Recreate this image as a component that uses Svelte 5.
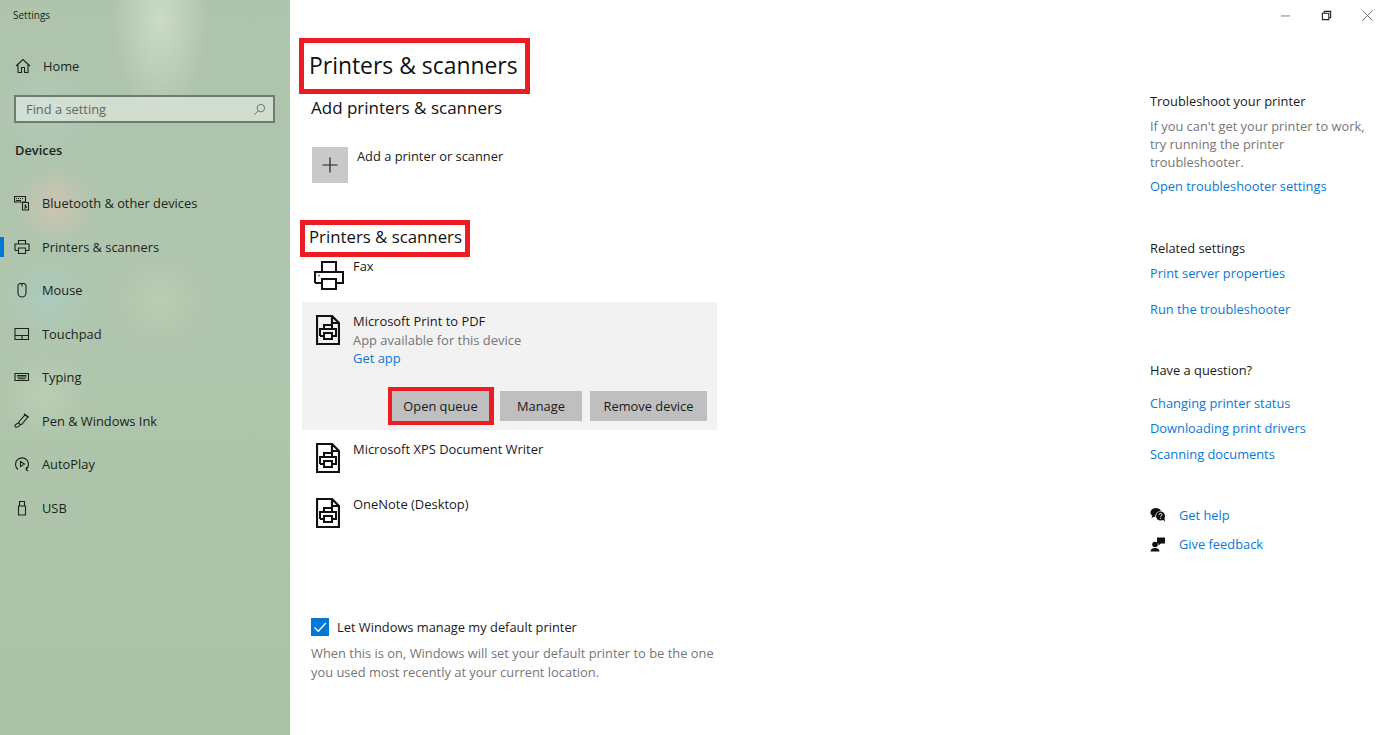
<script>
  const nav = [
    { label: 'Bluetooth & other devices', icon: 'M.5 1.500h11v5.500H.5zM2 3.500h1M4 3.500h1M6 3.500h1M8 3.500h1M2 5.500h5M8.500 7.500v7.500h6V7.500zM11.500 9.500v3.500M10.500 10.500l2 1.500-2 1.500' },
    { label: 'Printers & scanners', active: true, icon: 'M4.500 5V1.500h7V5M1 11.500V5h14v6.500h-3.500M1 11.500h3.500M4.500 9h7v5.500h-7z' },
    { label: 'Mouse', icon: 'M4 4.500a2.500 2.500 0 0 1 2.500-3h3a2.500 2.500 0 0 1 2.500 3v6.500a4 4 0 0 1-8 0zM8 1.500v3' },
    { label: 'Touchpad', icon: 'M1 2.500h13.500v11H1zM1 9.500h13.500M8 9.500v4' },
    { label: 'Typing', icon: 'M1 4.500h13.500v7H1zM3 6.500h9.500M3 8h9.500M4 9.800h7.500' },
    { label: 'Pen & Windows Ink', icon: 'M6 12l-1.200-3L11 1.800 13.700 4 8 11zM10 .8l4.800 3.500M6 12c-1.500 2-4.500 3-5 1.300C.6 11.800 3 10.300 4.800 10' },
    { label: 'AutoPlay', icon: 'M4 13.500A6.500 6.500 0 1 1 12 13.500M6.500 5.500v5l4-2.500zM12 13.500l2 1.500M12 13.500l.5-2.500' },
    { label: 'USB', icon: 'M4.500 6h7v9h-7zM5.500 6V1.500h5V6M7 3.500h.01M9 3.500h.01' }
  ];

  const devices = [
    { name: 'Microsoft XPS Document Writer' },
    { name: 'OneNote (Desktop)' }
  ];

  const related = ['Print server properties', 'Run the troubleshooter'];
  const questions = ['Changing printer status', 'Downloading print drivers', 'Scanning documents'];
</script>

{#snippet docIcon()}
  <svg class="doc-icon" viewBox="0 0 24 30" fill="none" stroke="#111" stroke-width="2.200">
    <path d="M1 1h15l7 7v21H1zM16 1v7h7" />
    <path d="M8 14v-4h8v4M4 21v-7h16v7h-4M4 21h4M8 18h8v6H8z" stroke-width="2" />
  </svg>
{/snippet}

<div class="window">
  <aside class="sidebar">
    <div class="app-title">Settings</div>
    <div class="home">
      <svg class="nav-icon" viewBox="0 0 16 16" fill="none" stroke="#1c241c" stroke-width="1.100">
        <path d="M1 8l7-6.500L15 8M3 6.500V14.500h3.500V9.500h3v5H13V6.500" />
      </svg>
      <span>Home</span>
    </div>
    <div class="search">
      <span>Find a setting</span>
      <svg viewBox="0 0 16 16" fill="none" stroke="#5f6d60" stroke-width="1.100">
        <circle cx="9.700" cy="6.300" r="4.600" />
        <path d="M6.300 9.700L1.500 14.500" />
      </svg>
    </div>
    <div class="group">Devices</div>
    <nav>
      {#each nav as item}
        <div class="nav-row" class:active={item.active}>
          <svg class="nav-icon" viewBox="0 0 16 16" fill="none" stroke="#1c241c" stroke-width="1.100">
            <path d={item.icon} />
          </svg>
          <span>{item.label}</span>
        </div>
      {/each}
    </nav>
  </aside>

  <main class="main">
    <div class="window-controls">
      <svg viewBox="0 0 12 12" stroke="#777" fill="none"><path d="M1 6.500h10" /></svg>
      <svg viewBox="0 0 12 12" stroke="#222" fill="none" stroke-width="1.200"><path d="M1.500 3.500h7v7h-7zM3.500 3.500v-2h7v7h-2" /></svg>
      <svg viewBox="0 0 12 12" stroke="#666" fill="none"><path d="M.5.500l11 11M11.500.500l-11 11" /></svg>
    </div>

    <div class="columns">
      <section class="content">
        <h1 class="marked">Printers &amp; scanners</h1>
        <h2>Add printers &amp; scanners</h2>
        <div class="add-row">
          <div class="plus">
            <svg viewBox="0 0 16 16" stroke="#222" stroke-width="1.200" fill="none"><path d="M8 .5v15M.5 8h15" /></svg>
          </div>
          <span>Add a printer or scanner</span>
        </div>

        <h3 class="marked">Printers &amp; scanners</h3>

        <div class="fax-row">
          <svg viewBox="0 0 30 29" fill="none" stroke="#111" stroke-width="2">
            <path d="M8 11V1h14v10M1 22V11h28v11h-7M1 22h7M8 18h14v10H8zM4.500 14.500h1" />
          </svg>
          <span>Fax</span>
        </div>

        <div class="selected">
          <div class="selected-top">
            {@render docIcon()}
            <div class="selected-text">
              <div>Microsoft Print to PDF</div>
              <div class="muted">App available for this device</div>
              <div class="link">Get app</div>
            </div>
          </div>
          <div class="actions">
            <div class="queue-mark"><button type="button">Open queue</button></div>
            <button type="button" class="manage">Manage</button>
            <button type="button" class="remove">Remove device</button>
          </div>
        </div>

        {#each devices as device}
          <div class="device-row">
            {@render docIcon()}
            <span>{device.name}</span>
          </div>
        {/each}

        <label class="check-row">
          <span class="check">
            <svg viewBox="0 0 18 18" fill="none" stroke="#fff" stroke-width="1.300"><path d="M3.500 9.500l3.800 3.800 7.500-8.300" /></svg>
          </span>
          <span>Let Windows manage my default printer</span>
        </label>
        <p class="muted note">When this is on, Windows will set your default printer to be the one<br />you used most recently at your current location.</p>
      </section>

      <aside class="rail">
        <div class="rail-title">Troubleshoot your printer</div>
        <p class="muted rail-text">If you can't get your printer to work,<br />try running the printer<br />troubleshooter.</p>
        <div class="link rail-open">Open troubleshooter settings</div>

        <div class="rail-title related">Related settings</div>
        {#each related as text, i}
          <div class="link related-link" class:first={i === 0}>{text}</div>
        {/each}

        <div class="rail-title question">Have a question?</div>
        {#each questions as text}
          <div class="link question-link">{text}</div>
        {/each}

        <div class="help help-first">
          <svg viewBox="0 0 16 16" fill="#111">
            <path d="M6 1C2.800 1 .5 3 .5 5.500c0 1.400.7 2.500 1.800 3.300L1.500 11l2.800-1.200c.4.100.7.100 1 .2-.2-3.300 2-5.800 5.700-6C10.200 2.200 8.300 1 6 1z" />
            <circle cx="10.500" cy="9" r="4.500" />
            <path d="M12.500 12.500l2.500 2-.5-3.500z" />
            <path d="M9 7.800c0-1.800 3-1.800 3 0 0 1.200-1.500 1-1.500 2.200M10.500 11.200v.8" stroke="#fff" stroke-width="1" fill="none" />
          </svg>
          <span class="link">Get help</span>
        </div>
        <div class="help">
          <svg viewBox="0 0 16 16" fill="#111">
            <circle cx="5" cy="8.500" r="2.800" />
            <path d="M.5 15.500c0-2.500 2-3.500 4.500-3.500s4.500 1 4.500 3.500z" />
            <path d="M7 1.500h8v6h-4l-2.500 2V7.500H7z" />
          </svg>
          <span class="link">Give feedback</span>
        </div>
      </aside>
    </div>
  </main>
</div>

<style>
  :global(body) {
    margin: 0;
    background: #fff;
  }

  .window {
    width: 1384px;
    height: 735px;
    display: flex;
    overflow: hidden;
    font-family: 'Open Sans', 'Noto Sans', sans-serif;
    font-size: 12.850px;
    line-height: 20px;
    color: #1a1a1a;
  }

  .sidebar {
    width: 290px;
    flex: none;
    box-sizing: border-box;
    color: #1c241c;
    background:
      radial-gradient(circle 40px at 55px 205px, rgba(222, 196, 182, 0.6), rgba(222, 196, 182, 0) 100%),
      radial-gradient(circle 45px at 48px 300px, rgba(170, 208, 208, 0.5), rgba(170, 208, 208, 0) 100%),
      radial-gradient(circle 50px at 45px 110px, rgba(180, 215, 215, 0.3), rgba(180, 215, 215, 0) 100%),
      radial-gradient(circle 45px at 160px 300px, rgba(195, 210, 185, 0.55), rgba(195, 210, 185, 0) 100%),
      radial-gradient(circle 45px at 45px 395px, rgba(195, 215, 190, 0.5), rgba(195, 215, 190, 0) 100%),
      radial-gradient(ellipse 48px 95px at 160px 20px, rgba(208, 224, 203, 0.85), rgba(208, 224, 203, 0) 100%),
      linear-gradient(180deg, #afc4ad 0%, #b0c5ad 40%, #aac3a7 100%);
  }

  .app-title {
    height: 30px;
    padding-left: 13px;
    font-size: 10px;
    line-height: 30px;
  }

  .home {
    height: 44px;
    margin-top: 14px;
    padding-left: 15px;
    display: flex;
    align-items: center;
    gap: 12px;
  }

  .nav-icon {
    width: 16px;
    height: 16px;
    flex: none;
  }

  .search {
    box-sizing: border-box;
    width: 261px;
    height: 28px;
    margin: 7px 0 0 14px;
    padding: 0 7px 0 10px;
    border: 2px solid #6f7d70;
    display: flex;
    align-items: center;
    justify-content: space-between;
    background: rgba(255, 255, 255, 0.42);
    color: #606b60;
  }

  .search svg {
    width: 13px;
    height: 13px;
  }

  .group {
    margin: 17px 0 0 15px;
    font-weight: 600;
  }

  nav {
    margin-top: 21.400px;
  }

  .nav-row {
    height: 43.500px;
    padding-left: 14px;
    display: flex;
    align-items: center;
    gap: 12px;
    position: relative;
  }

  .nav-row.active::before {
    content: '';
    position: absolute;
    left: 0;
    top: 12px;
    width: 4px;
    height: 20px;
    background: #0078d7;
  }

  .main {
    flex: 1;
    min-width: 0;
    display: flex;
    flex-direction: column;
  }

  .window-controls {
    height: 30px;
    padding-right: 11px;
    display: flex;
    justify-content: flex-end;
    align-items: center;
    gap: 30px;
  }

  .window-controls svg {
    width: 11px;
    height: 11px;
  }

  .columns {
    display: flex;
    flex: 1;
  }

  .content {
    width: 860px;
    flex: none;
    box-sizing: border-box;
    padding: 8px 0 0 9px;
    display: flex;
    flex-direction: column;
    align-items: flex-start;
  }

  .marked {
    box-sizing: border-box;
    border: 5px solid #ed1c24;
    font-weight: 400;
    margin: 0;
    color: #111;
  }

  h1.marked {
    height: 56px;
    padding: 0 7px 0 5px;
    font-size: 22.900px;
    line-height: 45px;
  }

  h2 {
    margin: 0 0 0 12px;
    font-size: 17px;
    line-height: 28px;
    font-weight: 400;
    color: #111;
  }

  .add-row {
    margin: 25px 0 0 13px;
    display: flex;
    gap: 9px;
    height: 36px;
  }

  .add-row span {
    margin-top: -1px;
  }

  .plus {
    width: 36px;
    height: 36px;
    background: #c9c9c9;
    display: flex;
    align-items: center;
    justify-content: center;
  }

  .plus svg {
    width: 16px;
    height: 16px;
  }

  h3.marked {
    height: 37px;
    margin: 37px 0 0 1px;
    padding: 0 3px 0 4px;
    font-size: 16.800px;
    line-height: 23px;
  }

  .fax-row {
    height: 30px;
    margin: 3px 0 0 15px;
    display: flex;
    gap: 9px;
  }

  .fax-row svg {
    width: 30px;
    height: 29px;
    flex: none;
    margin-top: 1px;
  }

  .fax-row span {
    margin-top: -4px;
  }

  .selected {
    box-sizing: border-box;
    width: 415px;
    height: 128px;
    margin: 12px 0 0 3px;
    background: #f2f2f2;
    display: flex;
    flex-direction: column;
  }

  .selected-top {
    padding: 13px 0 0 14px;
    display: flex;
    gap: 13px;
  }

  .doc-icon {
    width: 24px;
    height: 30px;
    flex: none;
  }

  .selected-text {
    margin-top: -3px;
    font-size: 12.950px;
    line-height: 18.500px;
  }

  .muted {
    color: #767676;
  }

  .link {
    color: #0a78d4;
  }

  .actions {
    margin-top: 19px;
    padding-right: 10px;
    display: flex;
    align-items: center;
    justify-content: flex-end;
  }

  .queue-mark {
    border: 4px solid #ed1c24;
    border-right-width: 5px;
    margin-right: 6px;
    display: flex;
  }

  button {
    box-sizing: border-box;
    height: 30px;
    padding: 0;
    border: 0;
    border-radius: 0;
    background: #bfbfbf;
    color: #1a1a1a;
    font: inherit;
  }

  .queue-mark button {
    width: 97px;
  }

  .manage {
    width: 82px;
    margin-right: 8px;
  }

  .remove {
    width: 117px;
  }

  .device-row {
    height: 55px;
    margin-left: 17px;
    display: flex;
    gap: 13px;
    font-size: 12.950px;
  }

  .selected + .device-row {
    margin-top: 13px;
  }

  .device-row span {
    margin-top: -4px;
  }

  .check-row {
    margin: 64px 0 0 12px;
    display: flex;
    align-items: center;
    gap: 8px;
  }

  .check {
    width: 18px;
    height: 18px;
    background: #0078d7;
    display: flex;
  }

  .note {
    margin: 7px 0 0 12px;
    font-size: 12.900px;
    line-height: 19px;
  }

  .rail {
    flex: 1;
    padding-top: 61px;
  }

  .rail p {
    margin: 0;
  }

  .rail .rail-text {
    margin-top: 6px;
    line-height: 18px;
  }

  .rail-open {
    margin-top: 5px;
  }

  .related {
    margin-top: 42px;
  }

  .related-link {
    margin-top: 16px;
  }

  .related-link.first {
    margin-top: 5px;
  }

  .question {
    margin-top: 41px;
  }

  .question-link {
    margin-top: 5.250px;
  }

  .question + .question-link {
    margin-top: 13px;
  }

  .help {
    display: flex;
    align-items: center;
    gap: 13px;
    margin-top: 9px;
  }

  .help-first {
    margin-top: 41.500px;
  }

  .help svg {
    width: 16px;
    height: 16px;
    flex: none;
  }
</style>
